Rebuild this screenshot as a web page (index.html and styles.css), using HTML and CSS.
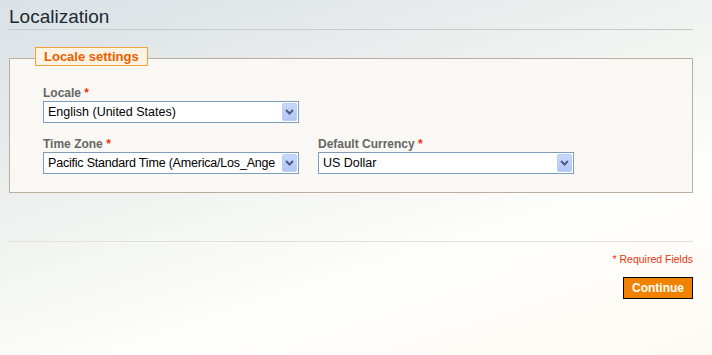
FILE: index.html
```html
<!DOCTYPE html>
<html lang="en">
<head>
    <meta charset="UTF-8">
    <meta name="viewport" content="width=device-width, initial-scale=1.0">
    <title>Localization</title>
    <link rel="stylesheet" href="styles.css">
</head>
<body>
    <div id="page">
        <h1 class="page-title">Localization</h1>

        <div class="fieldset">
            <div class="legend">Locale settings</div>

            <div class="field">
                <label>Locale <span class="req">*</span></label>
                <div class="select">
                    <span class="select-text">English (United States)</span>
                    <span class="select-btn"><svg width="9" height="6" viewBox="0 0 9 6"><polyline points="1,1 4.5,4.5 8,1" fill="none" stroke="#4a5d80" stroke-width="2"/></svg></span>
                </div>
            </div>

            <div class="field-row">
                <div class="field">
                    <label>Time Zone <span class="req">*</span></label>
                    <div class="select">
                        <span class="select-text tight">Pacific Standard Time (America/Los_Ange</span>
                        <span class="select-btn"><svg width="9" height="6" viewBox="0 0 9 6"><polyline points="1,1 4.5,4.5 8,1" fill="none" stroke="#4a5d80" stroke-width="2"/></svg></span>
                    </div>
                </div>
                <div class="field">
                    <label>Default Currency <span class="req">*</span></label>
                    <div class="select">
                        <span class="select-text">US Dollar</span>
                        <span class="select-btn"><svg width="9" height="6" viewBox="0 0 9 6"><polyline points="1,1 4.5,4.5 8,1" fill="none" stroke="#4a5d80" stroke-width="2"/></svg></span>
                    </div>
                </div>
            </div>
        </div>

        <div class="buttons-set">
            <p class="required">* Required Fields</p>
            <button type="button">Continue</button>
        </div>
    </div>
</body>
</html>
```

FILE: styles.css
```css
html {
    min-height: 100%;
    background: linear-gradient(162deg, #d9e2e7 0%, #e5e9e9 22%, #f3f5f3 46%, #fefefc 68%, #fdfbf4 100%);
}
body {
    margin: 0;
    font-family: "Liberation Sans", Arial, sans-serif;
    color: #2f2f2f;
}
#page {
    padding: 0 19px 0 9px;
}
.page-title {
    margin: 0;
    padding-top: 5px;
    font-size: 19px;
    font-weight: normal;
    line-height: 24px;
    color: #1e2a33;
    border-bottom: 1px solid #c9cbcb;
}
.fieldset {
    margin-top: 28px;
    background-color: #faf8f4;
    border: 1px solid #bcae9e;
    padding: 0 0 18px 33px;
}
.legend {
    width: max-content;
    margin: -12px 0 0 -8px;
    padding: 0 8px;
    background-color: #fdf3e3;
    border: 1px solid #f0a23c;
    color: #eb5e00;
    font-size: 13px;
    font-weight: bold;
    line-height: 17px;
}
.field {
    margin-top: 20px;
    width: 256px;
}
.field-row {
    display: flex;
    gap: 19px;
    margin-top: 14px;
}
.field-row .field {
    margin-top: 0;
}
label {
    display: block;
    font-size: 12px;
    font-weight: bold;
    line-height: 15px;
    color: #666;
}
.req {
    color: #eb340a;
}
.select {
    display: flex;
    align-items: center;
    height: 22px;
    box-sizing: border-box;
    border: 1px solid #7f9db9;
    background-color: #fff;
    padding: 0 1px 0 4px;
}
.select-text {
    flex: 1;
    overflow: hidden;
    white-space: nowrap;
    font-size: 12.5px;
    color: #000;
}
.select-text.tight {
    letter-spacing: -0.2px;
}
.select-btn {
    display: flex;
    align-items: center;
    justify-content: center;
    width: 15px;
    height: 18px;
    margin-left: 2px;
    border: 1px solid #b9cdf6;
    border-radius: 2px;
    background: linear-gradient(#c9d9fc, #b2c6f6);
    box-sizing: border-box;
}
.buttons-set {
    margin-top: 48px;
    border-top: 1px solid #e3e0dc;
    text-align: right;
}
.required {
    margin: 10px 0 10px;
    font-size: 10.5px;
    line-height: 15px;
    color: #eb340a;
}
button {
    height: 22px;
    width: 70px;
    padding: 0;
    background-color: #f18200;
    border: 1px solid #000;
    color: #fff;
    font-family: "Liberation Sans", Arial, sans-serif;
    font-size: 12px;
    font-weight: bold;
    cursor: pointer;
}
```
